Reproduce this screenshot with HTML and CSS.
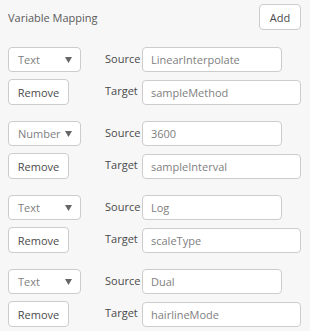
FILE: index.html
```html
<!DOCTYPE html>
<html lang="en">
<head>
  <meta charset="UTF-8">
  <meta name="viewport" content="width=device-width, initial-scale=1.0">
  <title>Variable Mapping</title>
  <link rel="stylesheet" href="styles.css">
</head>
<body>
  <!-- Header -->
  <header class="panel-header">
    <h1>Variable Mapping</h1>
    <button class="btn btn-add">Add</button>
  </header>

  <!-- Mappings -->
  <main class="mapping-list" id="mapping-list">
    <div class="mapping">
      <div class="select"><span>Text</span><svg class="arrow" width="7" height="6" viewBox="0 0 7 6"><path d="M0 0H7L3.5 6Z"/></svg></div>
      <label class="field-label">Source</label>
      <input class="field field-source" type="text" value="LinearInterpolate">
      <button class="btn btn-remove">Remove</button>
      <label class="field-label">Target</label>
      <input class="field field-target" type="text" value="sampleMethod">
    </div>

    <div class="mapping">
      <div class="select"><span>Number</span><svg class="arrow" width="7" height="6" viewBox="0 0 7 6"><path d="M0 0H7L3.5 6Z"/></svg></div>
      <label class="field-label">Source</label>
      <input class="field field-source" type="text" value="3600">
      <button class="btn btn-remove">Remove</button>
      <label class="field-label">Target</label>
      <input class="field field-target" type="text" value="sampleInterval">
    </div>

    <div class="mapping">
      <div class="select"><span>Text</span><svg class="arrow" width="7" height="6" viewBox="0 0 7 6"><path d="M0 0H7L3.5 6Z"/></svg></div>
      <label class="field-label">Source</label>
      <input class="field field-source" type="text" value="Log">
      <button class="btn btn-remove">Remove</button>
      <label class="field-label">Target</label>
      <input class="field field-target" type="text" value="scaleType">
    </div>

    <div class="mapping">
      <div class="select"><span>Text</span><svg class="arrow" width="7" height="6" viewBox="0 0 7 6"><path d="M0 0H7L3.5 6Z"/></svg></div>
      <label class="field-label">Source</label>
      <input class="field field-source" type="text" value="Dual">
      <button class="btn btn-remove">Remove</button>
      <label class="field-label">Target</label>
      <input class="field field-target" type="text" value="hairlineMode">
    </div>
  </main>
</body>
</html>
```

FILE: styles.css
```css
* {
  margin: 0;
  padding: 0;
  box-sizing: border-box;
}
body {
  font-family: "Open Sans", Lato, sans-serif;
  font-size: 11px;
  color: #444;
  background: #f7f7f7;
  padding: 4px 9px 0 8px;
}

/* Header */
.panel-header {
  display: flex;
  justify-content: space-between;
  align-items: center;
  height: 26px;
}
.panel-header h1 {
  font-size: 11px;
  font-weight: normal;
  color: #5a5a5a;
  padding-top: 1px;
}

/* Buttons */
.btn {
  font-family: inherit;
  font-size: 11px;
  color: #4a4a4a;
  background: #fff;
  border: 1px solid #ccc;
  border-radius: 4px;
  height: 26px;
  cursor: pointer;
}
.btn-add {
  width: 42px;
}
.btn-remove {
  width: 61px;
}

/* Mapping rows */
.mapping-list {
  margin-top: 17px;
}
.mapping {
  display: grid;
  grid-template-columns: 97px 37px auto;
  grid-template-rows: 25px 26px;
  row-gap: 7px;
  align-items: center;
  margin-bottom: 16px;
}
.select {
  display: flex;
  justify-content: space-between;
  align-items: center;
  width: 73px;
  height: 25px;
  padding: 0 8px 0 9px;
  background: #fff;
  border: 1px solid #ccc;
  border-radius: 4px;
  color: #808080;
}
.arrow {
  fill: #666;
}
.field-label {
  color: #4a4a4a;
  padding-bottom: 3px;
}
.field {
  font-family: inherit;
  font-size: 11px;
  color: #808080;
  background: #fff;
  border: 1px solid #ccc;
  border-radius: 4px;
  padding: 0 8px;
  outline: none;
}
.field-source {
  width: 140px;
  height: 25px;
}
.field-target {
  width: 159px;
  height: 25px;
}
```
